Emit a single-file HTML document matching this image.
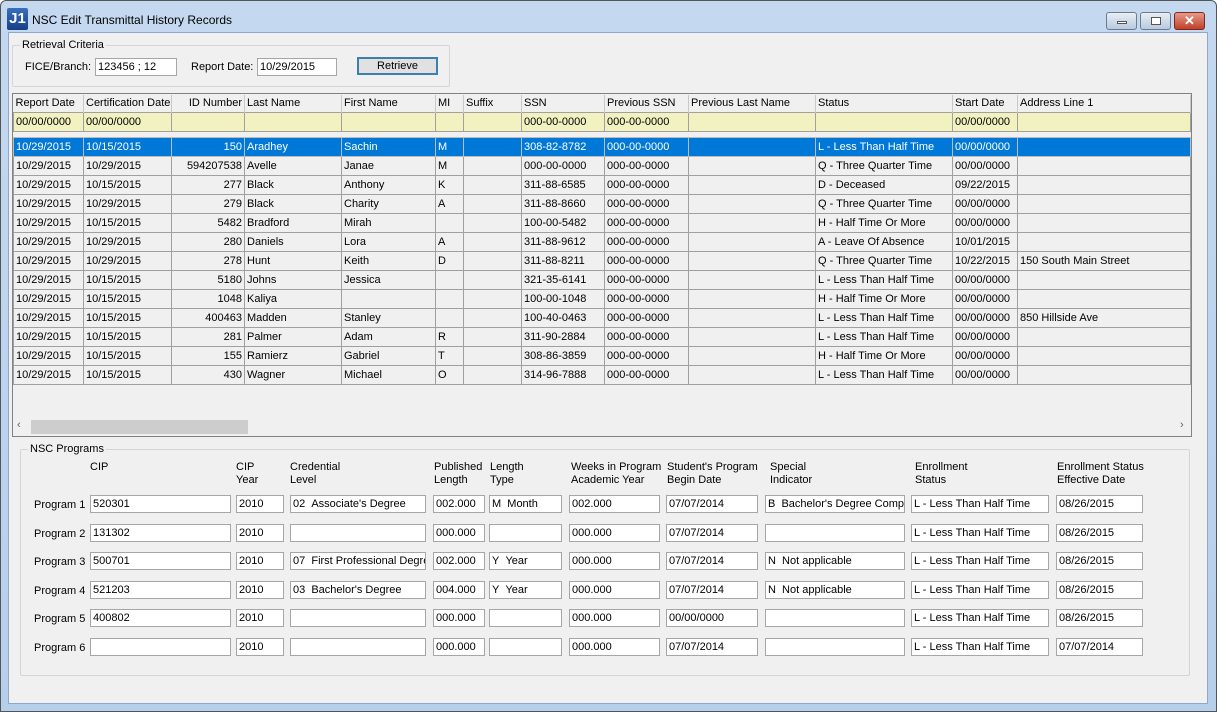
<!DOCTYPE html>
<html><head><style>
*{box-sizing:border-box;margin:0;padding:0}
body{width:1217px;height:712px;background:#fff;font-family:"Liberation Sans",sans-serif;font-size:11px;color:#000;position:relative;overflow:hidden}
.frame{position:absolute;left:0;top:0;width:1217px;height:712px;background:linear-gradient(#c4d9f0,#b6cfeb);border:1px solid #555;border-radius:6px 6px 0 0}
.client{position:absolute;left:8px;top:32px;width:1200px;height:672px;background:#f0f0f0;border:1px solid #8ea8c8}
.a{position:absolute;white-space:nowrap}
.inp{position:absolute;background:#fff;border:1px solid #a6a6a6;height:18px;padding:1px 2px;line-height:14px;white-space:nowrap;overflow:hidden}
.grp{position:absolute;border:1px solid #d5d5d5;border-radius:2px}
table{border-collapse:collapse;table-layout:fixed;position:absolute;left:13px}
td{border:1px solid #a0a0a0;height:19px;padding:0 2px;white-space:nowrap;overflow:hidden;line-height:17px}
.hd td{border:none;border-right:1px solid #c8c8c8;height:17px;background:#f0f0f0}
.f td{background:#f2f2c0}
.sel td{background:#0078d7;color:#fff;border-color:#bbb}
.r{text-align:right}
.g{background:#f0f0f0}
.btn{position:absolute;top:12px;height:18px;border:1px solid #6d7b8e;border-radius:3px;background:linear-gradient(#e8eef6,#b9c9dd)}
</style></head><body>
<div class="frame"></div>
<div class="a" style="left:7px;top:8px;width:21px;height:22px;background:linear-gradient(#3a6fc0,#163f86);color:#fff;font-weight:bold;font-size:15px;text-align:center;line-height:22px;border-radius:2px">J1</div>
<div class="a" style="left:32px;top:13px;font-size:12px">NSC Edit Transmittal History Records</div>
<div class="btn" style="left:1106px;width:31px"><div style="position:absolute;left:10px;top:8px;width:10px;height:3px;background:#fff;border:1px solid #555"></div></div>
<div class="btn" style="left:1140px;width:31px"><div style="position:absolute;left:10px;top:4px;width:10px;height:8px;border:1px solid #555;background:#fff"></div></div>
<div class="btn" style="left:1174px;width:31px;background:linear-gradient(#e59a88,#c0402a);border-color:#7a2a1e;color:#fff;font-weight:bold;text-align:center;line-height:16px;font-size:13px">✕</div>
<div class="client"></div>

<div class="grp" style="left:12px;top:45px;width:438px;height:42px"></div>
<div class="a" style="left:20px;top:39px;background:#f0f0f0;padding:0 2px">Retrieval Criteria</div>
<div class="a" style="left:25px;top:61px">FICE/Branch:</div>
<div class="inp" style="left:95px;top:58px;width:82px">123456 ; 12</div>
<div class="a" style="left:191px;top:61px">Report Date:</div>
<div class="inp" style="left:257px;top:58px;width:80px">10/29/2015</div>
<div class="a" style="left:357px;top:57px;width:81px;height:18px;border:2px solid #3c7fb1;background:#e1e1e1;text-align:center;line-height:14px">Retrieve</div>

<div class="a" style="left:12px;top:93px;width:1180px;height:344px;border:1px solid #828282;background:#f0f0f0"></div>
<table style="top:95px;width:1177px">
<colgroup><col style="width:70px"><col style="width:88px"><col style="width:73px"><col style="width:97px"><col style="width:94px"><col style="width:28px"><col style="width:58px"><col style="width:83px"><col style="width:84px"><col style="width:127px"><col style="width:137px"><col style="width:65px"><col style="width:173px"></colgroup>
<tr class="hd"><td>Report Date</td><td>Certification Date</td><td class="r">ID Number</td><td>Last Name</td><td>First Name</td><td>MI</td><td>Suffix</td><td>SSN</td><td>Previous SSN</td><td>Previous Last Name</td><td>Status</td><td>Start Date</td><td>Address Line 1</td></tr>
<tr class="f"><td>00/00/0000</td><td>00/00/0000</td><td></td><td></td><td></td><td></td><td></td><td>000-00-0000</td><td>000-00-0000</td><td></td><td></td><td>00/00/0000</td><td></td></tr>
</table>
<table style="top:137px;width:1177px">
<colgroup><col style="width:70px"><col style="width:88px"><col style="width:73px"><col style="width:97px"><col style="width:94px"><col style="width:28px"><col style="width:58px"><col style="width:83px"><col style="width:84px"><col style="width:127px"><col style="width:137px"><col style="width:65px"><col style="width:173px"></colgroup>
<tr class="sel"><td>10/29/2015</td><td>10/15/2015</td><td class="r">150</td><td>Aradhey</td><td>Sachin</td><td>M</td><td></td><td>308-82-8782</td><td>000-00-0000</td><td></td><td>L - Less Than Half Time</td><td>00/00/0000</td><td></td></tr>
<tr><td class="g">10/29/2015</td><td>10/29/2015</td><td class="r g">594207538</td><td>Avelle</td><td>Janae</td><td>M</td><td></td><td>000-00-0000</td><td>000-00-0000</td><td></td><td>Q - Three Quarter Time</td><td>00/00/0000</td><td></td></tr>
<tr><td class="g">10/29/2015</td><td>10/15/2015</td><td class="r g">277</td><td>Black</td><td>Anthony</td><td>K</td><td></td><td>311-88-6585</td><td>000-00-0000</td><td></td><td>D - Deceased</td><td>09/22/2015</td><td></td></tr>
<tr><td class="g">10/29/2015</td><td>10/29/2015</td><td class="r g">279</td><td>Black</td><td>Charity</td><td>A</td><td></td><td>311-88-8660</td><td>000-00-0000</td><td></td><td>Q - Three Quarter Time</td><td>00/00/0000</td><td></td></tr>
<tr><td class="g">10/29/2015</td><td>10/15/2015</td><td class="r g">5482</td><td>Bradford</td><td>Mirah</td><td></td><td></td><td>100-00-5482</td><td>000-00-0000</td><td></td><td>H - Half Time Or More</td><td>00/00/0000</td><td></td></tr>
<tr><td class="g">10/29/2015</td><td>10/29/2015</td><td class="r g">280</td><td>Daniels</td><td>Lora</td><td>A</td><td></td><td>311-88-9612</td><td>000-00-0000</td><td></td><td>A - Leave Of Absence</td><td>10/01/2015</td><td></td></tr>
<tr><td class="g">10/29/2015</td><td>10/29/2015</td><td class="r g">278</td><td>Hunt</td><td>Keith</td><td>D</td><td></td><td>311-88-8211</td><td>000-00-0000</td><td></td><td>Q - Three Quarter Time</td><td>10/22/2015</td><td>150 South Main Street</td></tr>
<tr><td class="g">10/29/2015</td><td>10/15/2015</td><td class="r g">5180</td><td>Johns</td><td>Jessica</td><td></td><td></td><td>321-35-6141</td><td>000-00-0000</td><td></td><td>L - Less Than Half Time</td><td>00/00/0000</td><td></td></tr>
<tr><td class="g">10/29/2015</td><td>10/15/2015</td><td class="r g">1048</td><td>Kaliya</td><td></td><td></td><td></td><td>100-00-1048</td><td>000-00-0000</td><td></td><td>H - Half Time Or More</td><td>00/00/0000</td><td></td></tr>
<tr><td class="g">10/29/2015</td><td>10/15/2015</td><td class="r g">400463</td><td>Madden</td><td>Stanley</td><td></td><td></td><td>100-40-0463</td><td>000-00-0000</td><td></td><td>L - Less Than Half Time</td><td>00/00/0000</td><td>850 Hillside Ave</td></tr>
<tr><td class="g">10/29/2015</td><td>10/15/2015</td><td class="r g">281</td><td>Palmer</td><td>Adam</td><td>R</td><td></td><td>311-90-2884</td><td>000-00-0000</td><td></td><td>L - Less Than Half Time</td><td>00/00/0000</td><td></td></tr>
<tr><td class="g">10/29/2015</td><td>10/15/2015</td><td class="r g">155</td><td>Ramierz</td><td>Gabriel</td><td>T</td><td></td><td>308-86-3859</td><td>000-00-0000</td><td></td><td>H - Half Time Or More</td><td>00/00/0000</td><td></td></tr>
<tr><td class="g">10/29/2015</td><td>10/15/2015</td><td class="r g">430</td><td>Wagner</td><td>Michael</td><td>O</td><td></td><td>314-96-7888</td><td>000-00-0000</td><td></td><td>L - Less Than Half Time</td><td>00/00/0000</td><td></td></tr>
</table>
<div class="a" style="left:13px;top:418px;width:1178px;height:17px;background:#f0f0f0"></div>
<div class="a" style="left:31px;top:420px;width:217px;height:14px;background:#cdcdcd"></div>
<div class="a" style="left:17px;top:419px;color:#606060">&lsaquo;</div>
<div class="a" style="left:1180px;top:419px;color:#606060">&rsaquo;</div>

<div class="grp" style="left:20px;top:449px;width:1170px;height:227px"></div>
<div class="a" style="left:28px;top:443px;background:#f0f0f0;padding:0 2px">NSC Programs</div>
<div class="a" style="left:90px;top:461px">CIP</div>
<div class="a" style="left:236px;top:461px;line-height:13px">CIP<br>Year</div>
<div class="a" style="left:290px;top:461px;line-height:13px">Credential<br>Level</div>
<div class="a" style="left:434px;top:461px;line-height:13px">Published<br>Length</div>
<div class="a" style="left:490px;top:461px;line-height:13px">Length<br>Type</div>
<div class="a" style="left:571px;top:461px;line-height:13px">Weeks in Program<br>Academic Year</div>
<div class="a" style="left:667px;top:461px;line-height:13px">Student's Program<br>Begin Date</div>
<div class="a" style="left:770px;top:461px;line-height:13px">Special<br>Indicator</div>
<div class="a" style="left:915px;top:461px;line-height:13px">Enrollment<br>Status</div>
<div class="a" style="left:1057px;top:461px;line-height:13px">Enrollment Status<br>Effective Date</div>

<div class="a" style="left:34px;top:499px">Program 1</div>
<div class="inp" style="left:90px;top:495px;width:141px">520301</div><div class="inp" style="left:236px;top:495px;width:48px">2010</div><div class="inp" style="left:290px;top:495px;width:136px">02&nbsp;&nbsp;Associate's Degree</div><div class="inp" style="left:433px;top:495px;width:52px">002.000</div><div class="inp" style="left:489px;top:495px;width:73px">M&nbsp;&nbsp;Month</div><div class="inp" style="left:569px;top:495px;width:91px">002.000</div><div class="inp" style="left:666px;top:495px;width:92px">07/07/2014</div><div class="inp" style="left:765px;top:495px;width:140px">B&nbsp;&nbsp;Bachelor's Degree Complete</div><div class="inp" style="left:911px;top:495px;width:138px">L - Less Than Half Time</div><div class="inp" style="left:1056px;top:495px;width:87px">08/26/2015</div>

<div class="a" style="left:34px;top:528px">Program 2</div>
<div class="inp" style="left:90px;top:524px;width:141px">131302</div><div class="inp" style="left:236px;top:524px;width:48px">2010</div><div class="inp" style="left:290px;top:524px;width:136px"></div><div class="inp" style="left:433px;top:524px;width:52px">000.000</div><div class="inp" style="left:489px;top:524px;width:73px"></div><div class="inp" style="left:569px;top:524px;width:91px">000.000</div><div class="inp" style="left:666px;top:524px;width:92px">07/07/2014</div><div class="inp" style="left:765px;top:524px;width:140px"></div><div class="inp" style="left:911px;top:524px;width:138px">L - Less Than Half Time</div><div class="inp" style="left:1056px;top:524px;width:87px">08/26/2015</div>

<div class="a" style="left:34px;top:556px">Program 3</div>
<div class="inp" style="left:90px;top:552px;width:141px">500701</div><div class="inp" style="left:236px;top:552px;width:48px">2010</div><div class="inp" style="left:290px;top:552px;width:136px">07&nbsp;&nbsp;First Professional Degree</div><div class="inp" style="left:433px;top:552px;width:52px">002.000</div><div class="inp" style="left:489px;top:552px;width:73px">Y&nbsp;&nbsp;Year</div><div class="inp" style="left:569px;top:552px;width:91px">000.000</div><div class="inp" style="left:666px;top:552px;width:92px">07/07/2014</div><div class="inp" style="left:765px;top:552px;width:140px">N&nbsp;&nbsp;Not applicable</div><div class="inp" style="left:911px;top:552px;width:138px">L - Less Than Half Time</div><div class="inp" style="left:1056px;top:552px;width:87px">08/26/2015</div>

<div class="a" style="left:34px;top:585px">Program 4</div>
<div class="inp" style="left:90px;top:581px;width:141px">521203</div><div class="inp" style="left:236px;top:581px;width:48px">2010</div><div class="inp" style="left:290px;top:581px;width:136px">03&nbsp;&nbsp;Bachelor's Degree</div><div class="inp" style="left:433px;top:581px;width:52px">004.000</div><div class="inp" style="left:489px;top:581px;width:73px">Y&nbsp;&nbsp;Year</div><div class="inp" style="left:569px;top:581px;width:91px">000.000</div><div class="inp" style="left:666px;top:581px;width:92px">07/07/2014</div><div class="inp" style="left:765px;top:581px;width:140px">N&nbsp;&nbsp;Not applicable</div><div class="inp" style="left:911px;top:581px;width:138px">L - Less Than Half Time</div><div class="inp" style="left:1056px;top:581px;width:87px">08/26/2015</div>

<div class="a" style="left:34px;top:613px">Program 5</div>
<div class="inp" style="left:90px;top:609px;width:141px">400802</div><div class="inp" style="left:236px;top:609px;width:48px">2010</div><div class="inp" style="left:290px;top:609px;width:136px"></div><div class="inp" style="left:433px;top:609px;width:52px">000.000</div><div class="inp" style="left:489px;top:609px;width:73px"></div><div class="inp" style="left:569px;top:609px;width:91px">000.000</div><div class="inp" style="left:666px;top:609px;width:92px">00/00/0000</div><div class="inp" style="left:765px;top:609px;width:140px"></div><div class="inp" style="left:911px;top:609px;width:138px">L - Less Than Half Time</div><div class="inp" style="left:1056px;top:609px;width:87px">08/26/2015</div>

<div class="a" style="left:34px;top:642px">Program 6</div>
<div class="inp" style="left:90px;top:638px;width:141px"></div><div class="inp" style="left:236px;top:638px;width:48px">2010</div><div class="inp" style="left:290px;top:638px;width:136px"></div><div class="inp" style="left:433px;top:638px;width:52px">000.000</div><div class="inp" style="left:489px;top:638px;width:73px"></div><div class="inp" style="left:569px;top:638px;width:91px">000.000</div><div class="inp" style="left:666px;top:638px;width:92px">07/07/2014</div><div class="inp" style="left:765px;top:638px;width:140px"></div><div class="inp" style="left:911px;top:638px;width:138px">L - Less Than Half Time</div><div class="inp" style="left:1056px;top:638px;width:87px">07/07/2014</div>
</body></html>
